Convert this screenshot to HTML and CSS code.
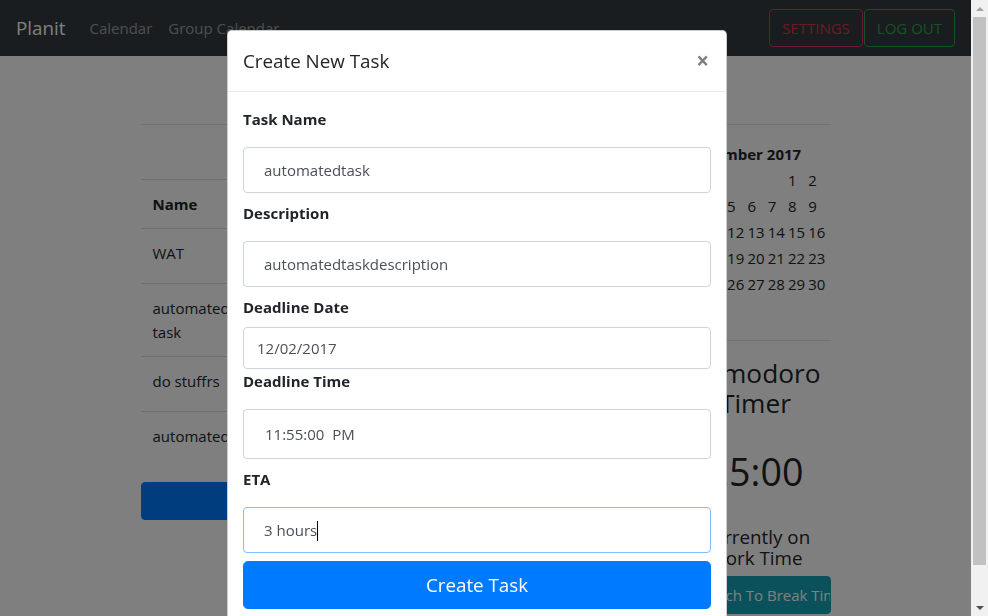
FILE: index.html
```html
<!DOCTYPE html>
<html lang="en">
<head>
<meta charset="utf-8">
<title>Planit</title>
<link rel="stylesheet" href="styles.css">
</head>
<body>
<div class="page">
  <nav class="navbar">
    <a class="brand">Planit</a>
    <div class="nav-links">
      <a class="nav-link">Calendar</a>
      <a class="nav-link">Group Calendar</a>
    </div>
    <div class="nav-actions">
      <button class="btn btn-outline-danger">SETTINGS</button>
      <button class="btn btn-outline-success">LOG OUT</button>
    </div>
  </nav>

  <main class="container">
    <hr class="rule">
    <div class="layout">
      <section class="tasks">
        <div class="task-table">
          <div class="tr head">
            <div class="td name">Name</div>
            <div class="td">Deadline</div>
            <div class="td">ETA</div>
            <div class="td">Actions</div>
          </div>
          <div class="tr">
            <div class="td name">WAT</div>
            <div class="td">11/30/2017</div>
            <div class="td">2 hours</div>
            <div class="td"><span class="btn-sm">Done</span></div>
          </div>
          <div class="tr">
            <div class="td name">automated task</div>
            <div class="td">12/02/2017</div>
            <div class="td">3 hours</div>
            <div class="td"><span class="btn-sm">Done</span></div>
          </div>
          <div class="tr">
            <div class="td name">do stuffrs</div>
            <div class="td">12/05/2017</div>
            <div class="td">1 hour</div>
            <div class="td"><span class="btn-sm">Done</span></div>
          </div>
          <div class="tr">
            <div class="td name">automated</div>
            <div class="td">12/02/2017</div>
            <div class="td">3 hours</div>
            <div class="td"><span class="btn-sm">Done</span></div>
          </div>
        </div>
        <button class="btn btn-primary btn-block">Create New Task</button>
      </section>

      <aside class="sidebar">
        <div class="calendar">
          <div class="cal-title">December 2017</div>
          <div class="cal-grid">
            <span></span><span></span><span></span><span></span><span></span><span>1</span><span>2</span>
            <span>3</span><span>4</span><span>5</span><span>6</span><span>7</span><span>8</span><span>9</span>
            <span>10</span><span>11</span><span>12</span><span>13</span><span>14</span><span>15</span><span>16</span>
            <span>17</span><span>18</span><span>19</span><span>20</span><span>21</span><span>22</span><span>23</span>
            <span>24</span><span>25</span><span>26</span><span>27</span><span>28</span><span>29</span><span>30</span>
            <span>31</span>
          </div>
        </div>
        <hr class="side-rule">
        <h3 class="pomo-title">Pomodoro Timer</h3>
        <div class="pomo-time">25:00</div>
        <h5 class="pomo-state">Currently on Work Time</h5>
        <div class="btn btn-info pomo-btn">Switch To Break Time</div>
      </aside>
    </div>
  </main>
</div>

<div class="backdrop"></div>

<div class="modal">
  <div class="modal-dialog">
    <div class="modal-header">
      <h4 class="modal-title">Create New Task</h4>
      <span class="close">×</span>
    </div>
    <div class="modal-body">
      <label class="field-label">Task Name</label>
      <div class="field">automatedtask</div>
      <label class="field-label">Description</label>
      <div class="field">automatedtaskdescription</div>
      <label class="field-label">Deadline Date</label>
      <div class="field field-date">12/02/2017</div>
      <label class="field-label">Deadline Time</label>
      <div class="field field-time">11:55:00&nbsp; PM</div>
      <label class="field-label">ETA</label>
      <div class="field field-focus">3 hours<span class="caret"></span></div>
      <button class="btn btn-primary btn-lg">Create Task</button>
    </div>
  </div>
</div>

<div class="scrollbar">
  <div class="sb-arrow sb-up"></div>
  <div class="sb-thumb"></div>
  <div class="sb-arrow sb-down"></div>
</div>
</body>
</html>
```

FILE: styles.css
```css
* { box-sizing: border-box; }

html, body {
  margin: 0;
  height: 100%;
}

body {
  font-family: "Open Sans", "Noto Sans", sans-serif;
  font-size: 15px;
  line-height: 24px;
  color: #212529;
  background: #fff;
  overflow: hidden;
}

.page { width: 971px; }

/* navbar */
.navbar {
  height: 56px;
  background: #343a40;
  display: flex;
  align-items: center;
  padding: 0 16px;
}
.brand {
  font-size: 18.8px;
  line-height: 30px;
  color: #fff;
  margin-right: 16px;
}
.nav-links { display: flex; }
.nav-link {
  color: rgba(255, 255, 255, .5);
  padding: 8px;
}
.nav-actions {
  margin-left: auto;
  display: flex;
  gap: 1px;
}

/* buttons */
.btn {
  display: inline-block;
  font-family: inherit;
  font-size: 15px;
  line-height: 24px;
  padding: 6px 12px;
  border: 1px solid transparent;
  border-radius: 4px;
  background: transparent;
  text-align: center;
  color: #212529;
}
.btn-outline-danger { color: #dc3545; border-color: #dc3545; }
.btn-outline-success { color: #28a745; border-color: #28a745; }
.btn-primary { background: #007bff; border-color: #007bff; color: #fff; }
.btn-info { background: #17a2b8; border-color: #17a2b8; color: #fff; }
.btn-block { display: block; width: 100%; }
.btn-lg {
  font-size: 18.8px;
  line-height: 30px;
  padding: 8px 16px;
  border-radius: 4.8px;
  width: 100%;
}
.btn-sm {
  display: inline-block;
  font-size: 13px;
  line-height: 20px;
  padding: 4px 8px;
  border: 1px solid #28a745;
  border-radius: 3px;
  background: #28a745;
  color: #fff;
}

/* page content */
.container {
  width: 690px;
  margin: 0 auto;
  padding-top: 68px;
}
.rule {
  margin: 0;
  border: 0;
  border-top: 1px solid rgba(0, 0, 0, .1);
}
.layout {
  display: grid;
  grid-template-columns: 1fr 150px;
  column-gap: 30px;
  align-items: start;
}

.task-table { margin-top: 54px; }
.tr {
  display: flex;
  border-top: 1px solid #dee2e6;
}
.td {
  flex: 1;
  padding: 12px;
}
.td.name {
  flex: 0 0 114px;
}
.head .td { font-weight: 700; }
.tasks .btn-block { margin-top: 16px; }

/* sidebar */
.calendar { padding-left: 6px; }
.cal-title {
  margin-top: 17px;
  font-weight: 700;
  line-height: 24px;
}
.cal-grid {
  margin-top: 1px;
  display: grid;
  grid-template-columns: repeat(7, 20.3px);
  grid-auto-rows: 26px;
  line-height: 26px;
}
.side-rule {
  margin: 17px 0 0;
  border: 0;
  border-top: 1px solid rgba(0, 0, 0, .1);
}
.pomo-title {
  margin: 17px 0 0;
  font-size: 26.3px;
  line-height: 30px;
  font-weight: 500;
  text-align: center;
}
.pomo-time {
  margin-top: 30px;
  font-size: 37.6px;
  line-height: 48px;
  text-align: center;
}
.pomo-state {
  margin: 31px 0 0;
  font-size: 18.8px;
  line-height: 21px;
  font-weight: 500;
  text-align: center;
}
.pomo-btn {
  display: block;
  margin-top: 7px;
  width: 100%;
  text-align: left;
  padding-left: 15px;
  white-space: nowrap;
  overflow: hidden;
}

/* modal */
.backdrop {
  position: fixed;
  top: 0;
  left: 0;
  width: 971px;
  height: 100%;
  background: rgba(0, 0, 0, .5);
}
.modal {
  position: fixed;
  top: 0;
  left: 0;
  width: 971px;
  height: 100%;
  padding-right: 17px;
}
.modal-dialog {
  width: 500px;
  margin: 30px auto 0;
  background: #fff;
  border: 1px solid rgba(0, 0, 0, .2);
  border-radius: 4.8px;
}
.modal-header {
  display: flex;
  align-items: flex-start;
  padding: 15px;
  border-bottom: 1px solid #e9ecef;
}
.modal-title {
  margin: 0;
  font-size: 18.8px;
  line-height: 30px;
  font-weight: 500;
}
.close {
  margin-left: auto;
  margin-right: 2px;
  font-size: 22.5px;
  line-height: 30px;
  font-weight: 700;
  color: #000;
  opacity: .5;
}
.modal-body {
  padding: 15px;
  display: flex;
  flex-direction: column;
}
.field-label {
  font-weight: 700;
  line-height: 24px;
  margin-bottom: 8px;
}
.field {
  margin: 8px 0;
  padding: 10px 20px;
  border: 1px solid #ced4da;
  border-radius: 4px;
  color: #495057;
  line-height: 24px;
  white-space: pre;
}
.field-date {
  margin: 0;
  padding: 8px 13px;
}
.field-time {
  margin-top: 8px;
  padding: 12px 21px;
}
.field-focus { border-color: #80bdff; }
.caret {
  display: inline-block;
  width: 1px;
  height: 20px;
  background: #000;
  vertical-align: -5px;
}

/* scrollbar */
.scrollbar {
  position: fixed;
  top: 0;
  right: 0;
  width: 17px;
  height: 100%;
  background: #f1f1f1;
  display: flex;
  flex-direction: column;
  align-items: center;
}
.sb-arrow {
  width: 17px;
  height: 17px;
  display: flex;
  align-items: center;
  justify-content: center;
}
.sb-up::before {
  content: "";
  border-left: 4px solid transparent;
  border-right: 4px solid transparent;
  border-bottom: 4px solid #a3a3a3;
}
.sb-down { margin-top: auto; }
.sb-down::before {
  content: "";
  border-left: 4px solid transparent;
  border-right: 4px solid transparent;
  border-top: 4px solid #505050;
}
.sb-thumb {
  width: 13px;
  height: 548px;
  background: #c1c1c1;
}
```
